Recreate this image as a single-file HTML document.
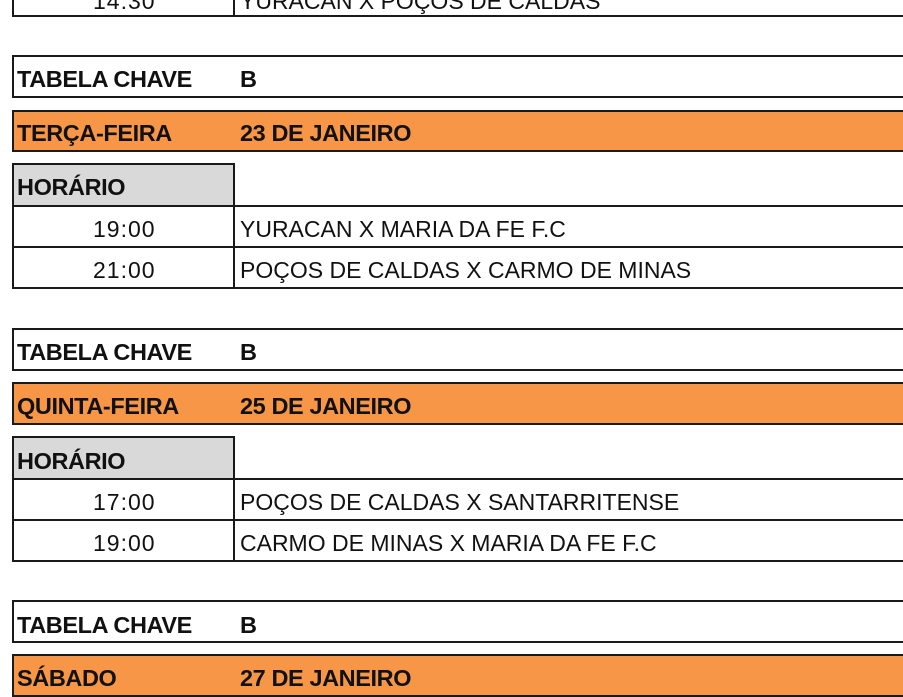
<!DOCTYPE html>
<html><head><style>
body{margin:0;width:903px;height:675px;overflow:hidden;background:#fff;position:relative;font-family:"Liberation Sans",Arial,sans-serif;color:#111}
.b{position:absolute;box-sizing:border-box;border:2px solid #1a1a1a;border-right:none}
.t{position:absolute;font-size:23px;white-space:nowrap;line-height:1}
.n{letter-spacing:1px}
.bd{font-weight:bold;font-size:23.5px;letter-spacing:-0.4px}
.o{background:#f79646}
.g{background:#d9d9d9}
.v{position:absolute;width:2px;background:#1a1a1a}
</style></head><body>
<div class="b" style="left:12px;top:-30px;width:900px;height:47px"></div>
<div class="v" style="left:233px;top:-5px;height:20px"></div>
<div class="t n" style="left:93px;top:-10px">14:30</div>
<div class="t" style="left:240px;top:-10px">YURACAN X POÇOS DE CALDAS</div>

<div class="b" style="left:12px;top:55px;width:900px;height:43px"></div>
<div class="t bd" style="left:17px;top:68px">TABELA CHAVE</div>
<div class="t bd" style="left:240px;top:68px">B</div>
<div class="b o" style="left:12px;top:110px;width:900px;height:42px"></div>
<div class="t bd" style="left:17px;top:122px">TERÇA-FEIRA</div>
<div class="t bd" style="left:240px;top:122px">23 DE JANEIRO</div>
<div class="b g" style="left:12px;top:163px;width:223px;height:44px;border-right:2px solid #1a1a1a"></div>
<div class="t bd" style="left:17px;top:176px">HORÁRIO</div>
<div class="b" style="left:12px;top:205px;width:900px;height:43px"></div>
<div class="b" style="left:12px;top:246px;width:900px;height:43px"></div>
<div class="v" style="left:233px;top:205px;height:83px"></div>
<div class="t n" style="left:93px;top:218px">19:00</div>
<div class="t" style="left:240px;top:218px">YURACAN X MARIA DA FE F.C</div>
<div class="t n" style="left:93px;top:259px">21:00</div>
<div class="t" style="left:240px;top:259px">POÇOS DE CALDAS X CARMO DE MINAS</div>

<div class="b" style="left:12px;top:328px;width:900px;height:43px"></div>
<div class="t bd" style="left:17px;top:341px">TABELA CHAVE</div>
<div class="t bd" style="left:240px;top:341px">B</div>
<div class="b o" style="left:12px;top:382px;width:900px;height:43px"></div>
<div class="t bd" style="left:17px;top:395px">QUINTA-FEIRA</div>
<div class="t bd" style="left:240px;top:395px">25 DE JANEIRO</div>
<div class="b g" style="left:12px;top:436px;width:223px;height:44px;border-right:2px solid #1a1a1a"></div>
<div class="t bd" style="left:17px;top:450px">HORÁRIO</div>
<div class="b" style="left:12px;top:478px;width:900px;height:43px"></div>
<div class="b" style="left:12px;top:519px;width:900px;height:43px"></div>
<div class="v" style="left:233px;top:478px;height:83px"></div>
<div class="t n" style="left:93px;top:491px">17:00</div>
<div class="t" style="left:240px;top:491px">POÇOS DE CALDAS X SANTARRITENSE</div>
<div class="t n" style="left:93px;top:532px">19:00</div>
<div class="t" style="left:240px;top:532px">CARMO DE MINAS X MARIA DA FE F.C</div>

<div class="b" style="left:12px;top:600px;width:900px;height:43px"></div>
<div class="t bd" style="left:17px;top:614px">TABELA CHAVE</div>
<div class="t bd" style="left:240px;top:614px">B</div>
<div class="b o" style="left:12px;top:654px;width:900px;height:43px"></div>
<div class="t bd" style="left:17px;top:667px">SÁBADO</div>
<div class="t bd" style="left:240px;top:667px">27 DE JANEIRO</div>
</body></html>
